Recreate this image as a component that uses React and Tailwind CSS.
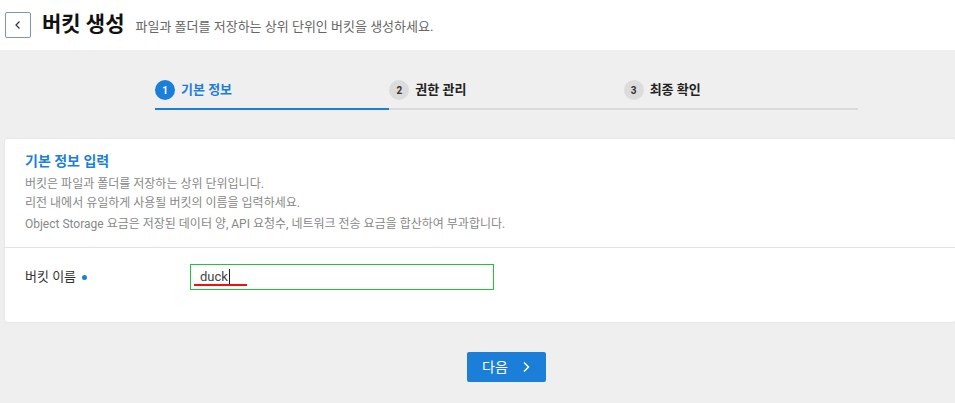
import React from 'react';

const font = { fontFamily: "Roboto, 'Noto Sans CJK KR', sans-serif" };

const steps = [
  { n: 1, label: '기본 정보', active: true },
  { n: 2, label: '권한 관리', active: false },
  { n: 3, label: '최종 확인', active: false },
];

function Stepper() {
  return (
    <div className="ml-[155px] flex w-[703px]">
      {steps.map((s) => (
        <div
          key={s.n}
          className={
            'flex h-[59px] flex-1 items-end gap-[6px] border-b-2 pb-[8px] ' +
            (s.active ? 'border-[#1b7fd9]' : 'border-[#dadada]')
          }
        >
          <span
            className={
              'flex h-[20px] w-[20px] items-center justify-center rounded-full text-[10px] font-bold ' +
              (s.active ? 'bg-[#1b7fd9] text-white' : 'bg-[#dcdcdc] text-[#333]')
            }
          >
            {s.n}
          </span>
          <span
            className={
              'text-[13px] font-bold leading-[20px] ' + (s.active ? 'text-[#1b7fd9]' : 'text-[#222]')
            }
          >
            {s.label}
          </span>
        </div>
      ))}
    </div>
  );
}

export default function App() {
  return (
    <div className="min-h-screen bg-[#efefef]" style={font}>
      {/* header */}
      <div className="flex h-[50px] items-center bg-white pl-[5px]">
        <button className="flex h-[26px] w-[26px] items-center justify-center rounded-[2px] border border-[#7d94b4] bg-white">
          <svg width="12" height="12" viewBox="0 0 12 12" fill="none">
            <path d="M7.5 2.5 L4 6 L7.5 9.5" stroke="#333" strokeWidth="1.2" />
          </svg>
        </button>
        <h1 className="ml-[11px] text-[21px] font-bold text-[#111]">버킷 생성</h1>
        <p className="ml-[11px] mt-[3px] text-[13px] text-[#666]">
          파일과 폴더를 저장하는 상위 단위인 버킷을 생성하세요.
        </p>
      </div>

      <div className="pt-[1px]">
        <Stepper />
      </div>

      {/* card */}
      <div className="ml-[5px] mt-[29px] rounded-[2px] bg-white shadow-[0_0_2px_rgba(0,0,0,0.12)]">
        <div className="px-[20px] pb-[13px] pt-[12px]">
          <h2 className="text-[14px] font-bold leading-[20px] text-[#1b7fd9]">기본 정보 입력</h2>
          <p className="mt-[4px] text-[12px] leading-[19px] text-[#888]">
            버킷은 파일과 폴더를 저장하는 상위 단위입니다.
            <br />
            리전 내에서 유일하게 사용될 버킷의 이름을 입력하세요.
          </p>
          <p className="mt-[1px] text-[12px] leading-[20px] text-[#888]">
            Object Storage 요금은 저장된 데이터 양, API 요청수, 네트워크 전송 요금을 합산하여 부과합니다.
          </p>
        </div>
        <div className="border-t border-[#e3e3e3] px-[20px] pb-[32px] pt-[16px]">
          <div className="flex items-center">
            <div className="flex w-[165px] items-center text-[13px] text-[#333]">
              버킷 이름
              <span className="ml-[6px] h-[5px] w-[5px] rounded-full bg-[#1b7fd9]" />
            </div>
            <div className="relative flex h-[26px] w-[304px] items-center border border-[#22c33a] pl-[9px] text-[13px] text-[#444]">
              <span>duck</span>
              <span className="ml-[1px] h-[17px] w-[1px] bg-[#222]" />
              <span className="absolute left-[3px] top-[19px] h-[2px] w-[53px] bg-[#ee1111]" />
            </div>
          </div>
        </div>
      </div>

      {/* footer button */}
      <div className="flex pl-[467px] pt-[30px]">
        <button className="flex h-[30px] w-[79px] items-center justify-center gap-[13px] rounded-[2px] bg-[#1b7fd9] text-[14px] text-white">
          다음
          <svg width="10" height="12" viewBox="0 0 10 12" fill="none">
            <path d="M3 1.5 L7.5 6 L3 10.5" stroke="#fff" strokeWidth="1.5" />
          </svg>
        </button>
      </div>
    </div>
  );
}
